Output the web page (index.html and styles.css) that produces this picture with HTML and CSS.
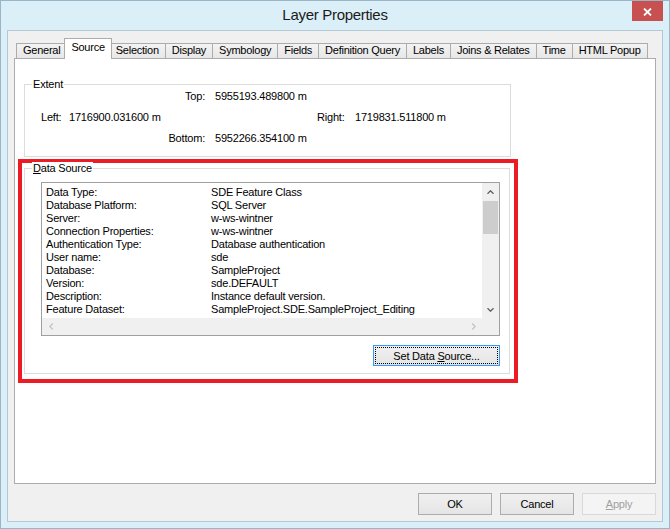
FILE: index.html
```html
<!DOCTYPE html>
<html lang="en">
<head>
  <meta charset="UTF-8">
  <title>Layer Properties</title>
  <link rel="stylesheet" href="styles.css">
</head>
<body>

<div class="window">
  <div class="titlebar">
    <span class="title">Layer Properties</span>
    <button class="close" title="Close">
      <svg width="9" height="8" viewBox="0 0 9 8"><path d="M1 0.5 L8 7.5 M8 0.5 L1 7.5" stroke="#fff" stroke-width="1.8"/></svg>
    </button>
  </div>

  <div class="client">
    <!-- tab strip -->
    <div class="tabs">
      <div class="tab">General</div>
      <div class="tab active">Source</div>
      <div class="tab">Selection</div>
      <div class="tab">Display</div>
      <div class="tab">Symbology</div>
      <div class="tab">Fields</div>
      <div class="tab">Definition Query</div>
      <div class="tab">Labels</div>
      <div class="tab">Joins &amp; Relates</div>
      <div class="tab">Time</div>
      <div class="tab">HTML Popup</div>
    </div>

    <div class="tab-page">
      <!-- extent -->
      <div class="group extent">
        <span class="legend">Extent</span>
        <div class="ext-row">
          <span class="lbl-mid">Top:</span>
          <span class="val-mid">5955193.489800 m</span>
        </div>
        <div class="ext-row">
          <span class="lbl-left">Left:</span>
          <span class="val-left">1716900.031600 m</span>
          <span class="lbl-right">Right:</span>
          <span>1719831.511800 m</span>
        </div>
        <div class="ext-row">
          <span class="lbl-mid">Bottom:</span>
          <span class="val-mid">5952266.354100 m</span>
        </div>
      </div>

      <!-- data source -->
      <div class="highlight">
        <div class="group source">
          <span class="legend"><u>D</u>ata Source</span>
          <div class="listbox">
            <div class="list-body">
              <div class="prop-list">
                <span>Data Type:</span><span>SDE Feature Class</span>
                <span>Database Platform:</span><span>SQL Server</span>
                <span>Server:</span><span>w-ws-wintner</span>
                <span>Connection Properties:</span><span>w-ws-wintner</span>
                <span>Authentication Type:</span><span>Database authentication</span>
                <span>User name:</span><span>sde</span>
                <span>Database:</span><span>SampleProject</span>
                <span>Version:</span><span>sde.DEFAULT</span>
                <span>Description:</span><span>Instance default version.</span>
                <span>Feature Dataset:</span><span>SampleProject.SDE.SampleProject_Editing</span>
              </div>
            </div>
            <div class="vscroll">
              <div class="sb-btn">
                <svg width="7" height="4" viewBox="0 0 7 4"><polyline points="0.5,3.8 3.5,0.8 6.5,3.8" fill="none" stroke="#606060" stroke-width="1.3"/></svg>
              </div>
              <div class="sb-track"><div class="thumb"></div></div>
              <div class="sb-btn">
                <svg width="7" height="4" viewBox="0 0 7 4"><polyline points="0.5,0.2 3.5,3.2 6.5,0.2" fill="none" stroke="#606060" stroke-width="1.3"/></svg>
              </div>
            </div>
            <div class="hscroll">
              <div class="sb-btn">
                <svg width="4" height="7" viewBox="0 0 4 7"><polyline points="3.8,0.5 0.8,3.5 3.8,6.5" fill="none" stroke="#c2c2c2" stroke-width="1.3"/></svg>
              </div>
              <div class="sb-track"></div>
              <div class="sb-btn">
                <svg width="4" height="7" viewBox="0 0 4 7"><polyline points="0.2,0.5 3.2,3.5 0.2,6.5" fill="none" stroke="#c2c2c2" stroke-width="1.3"/></svg>
              </div>
            </div>
            <div class="corner"></div>
          </div>
          <div class="source-actions">
            <button class="button focused">Set Data <u>S</u>ource...</button>
          </div>
        </div>
      </div>
    </div>

    <div class="dialog-buttons">
      <button class="button">OK</button>
      <button class="button">Cancel</button>
      <button class="button" disabled><u>A</u>pply</button>
    </div>
  </div>
</div>

</body>
</html>
```

FILE: styles.css
```css
* { box-sizing: border-box; }
body {
  margin: 0;
  font-family: "Segoe UI", "Liberation Sans", Arial, sans-serif;
  font-size: 11px;
  letter-spacing: -0.2px;
  color: #000;
  background: #dbeff8;
}
button {
  font: inherit;
  letter-spacing: inherit;
  color: inherit;
}

/* window frame */
.window {
  width: 670px;
  height: 529px;
  border: 1px solid #9ab6c6;
  background: #dbeff8;
  padding: 0 6px 6px;
  display: flex;
  flex-direction: column;
}
.titlebar {
  height: 29px;
  display: grid;
  grid-template-columns: 1fr auto 1fr;
}
.title {
  grid-column: 2;
  font-size: 15px;
  line-height: 28px;
  letter-spacing: -0.3px;
  color: #1b1b1b;
}
.close {
  grid-column: 3;
  justify-self: end;
  width: 31px;
  height: 20px;
  padding: 2px 0 0;
  border: 0;
  background: #c75050;
  display: flex;
  align-items: center;
  justify-content: center;
}
.client {
  flex: 1;
  border: 1px solid #b4c8d3;
  background: #f0f0f0;
  padding: 7px 6px 6px;
  display: flex;
  flex-direction: column;
}

/* tabs */
.tabs {
  display: flex;
  align-items: flex-end;
  height: 20px;
  padding-left: 2px;
  position: relative;
  z-index: 1;
}
.tab {
  height: 15px;
  line-height: 13px;
  padding: 0 6px;
  margin-left: -1px;
  border: 1px solid #acacac;
  border-bottom: 0;
  background: linear-gradient(#f3f3f3, #e7e7e7);
  letter-spacing: -0.25px;
  white-space: nowrap;
}
.tab:first-child { margin-left: 0; }
.tab.active {
  height: 21px;
  padding-top: 2px;
  margin: 0 -2px -1px -3px;
  background: #fff;
  position: relative;
}
.tab-page {
  height: 426px;
  border: 1px solid #acacac;
  background: #fff;
}

/* group boxes */
.group {
  position: relative;
  border: 1px solid #dcdcdc;
}
.legend {
  position: absolute;
  top: -7px;
  left: 7px;
  padding: 0 1px;
  line-height: 13px;
  background: #fff;
}
.extent {
  width: 487px;
  margin: 25px 0 0 9px;
  padding-bottom: 8px;
}
.ext-row {
  display: flex;
  align-items: center;
  height: 21px;
  white-space: nowrap;
}
.lbl-mid {
  width: 60px;
  margin-left: 120px;
  text-align: right;
}
.val-mid { margin-left: 10px; }
.lbl-left { width: 28px; margin-left: 16px; }
.val-left { width: 248px; }
.lbl-right { width: 38px; }

.highlight {
  width: 500px;
  margin: 2px 0 0 3px;
  padding: 5px 0 5px 2px;
  border: 4px solid #ec1c24;
}
.source { width: 486px; }

/* list box */
.listbox {
  width: 459px;
  height: 154px;
  margin: 13px 0 0 16px;
  border: 1px solid #a0a0a0;
  display: grid;
  grid-template-columns: 440px 17px;
  grid-template-rows: 135px 17px;
}
.list-body {
  overflow: hidden;
  padding: 3px 0 0 4px;
}
.prop-list {
  display: grid;
  grid-template-columns: 165px auto;
  line-height: 13px;
  white-space: nowrap;
}
.vscroll, .hscroll, .corner { background: #f0f0f0; }
.vscroll {
  display: flex;
  flex-direction: column;
}
.hscroll { display: flex; }
.sb-btn {
  width: 17px;
  height: 17px;
  flex: none;
  display: flex;
  align-items: center;
  justify-content: center;
}
.sb-track { flex: 1; }
.vscroll .sb-track { padding: 1px 1px 0; }
.thumb {
  height: 33px;
  background: #cdcdcd;
}

.source-actions {
  display: flex;
  justify-content: flex-end;
  padding: 9px 9px 7px 0;
}

/* buttons */
.button {
  width: 74px;
  height: 22px;
  padding: 0;
  border: 1px solid #acacac;
  background: linear-gradient(#f0f0f0, #e5e5e5);
  cursor: pointer;
}
.button.focused {
  width: 127px;
  height: 21px;
  border-color: #3399ff;
  outline: 1px dotted #000;
  outline-offset: -3px;
}
.button:disabled {
  border-color: #d9d9d9;
  background: #f4f4f4;
  color: #a0a0a0;
  cursor: default;
}
.dialog-buttons {
  display: flex;
  justify-content: flex-end;
  gap: 8px;
  margin-top: 9px;
}
```
